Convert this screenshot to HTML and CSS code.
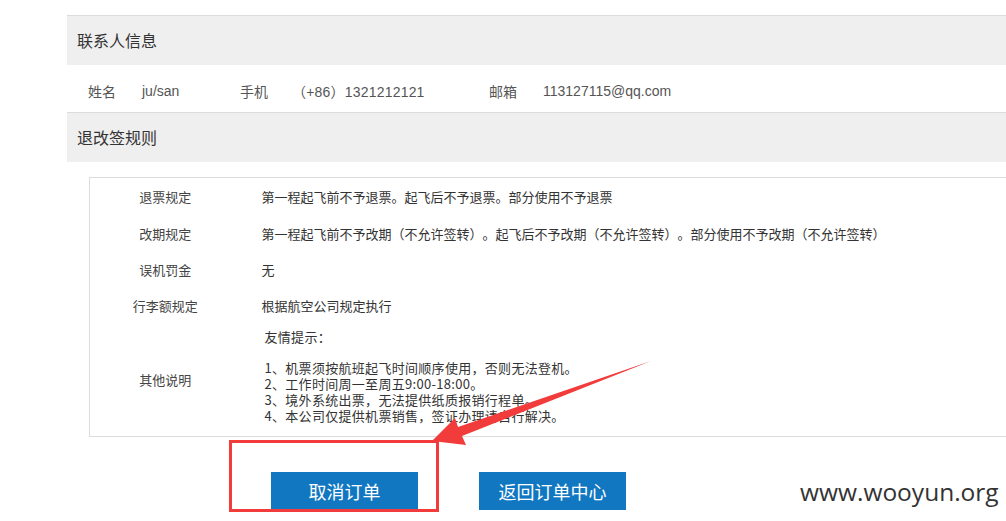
FILE: index.html
```html
<!DOCTYPE html>
<html lang="zh-CN">
<head>
    <meta charset="UTF-8">
    <title>订单详情</title>
    <link rel="stylesheet" href="styles.css">
</head>
<body>
<div class="page">
    <div class="section-title">联系人信息</div>
    <div class="contact">
        <span class="lbl">姓名</span><span class="val name">ju/san</span>
        <span class="lbl phone-lbl">手机</span><span class="val phone">（+86）1321212121</span>
        <span class="lbl">邮箱</span><span class="val">113127115@qq.com</span>
    </div>
    <div class="section-title">退改签规则</div>

    <table class="rules">
        <colgroup>
            <col class="key-col">
            <col>
        </colgroup>
        <tr>
            <td class="key">退票规定</td>
            <td>第一程起飞前不予退票。起飞后不予退票。部分使用不予退票</td>
        </tr>
        <tr>
            <td class="key">改期规定</td>
            <td>第一程起飞前不予改期（不允许签转）。起飞后不予改期（不允许签转）。部分使用不予改期（不允许签转）</td>
        </tr>
        <tr>
            <td class="key">误机罚金</td>
            <td>无</td>
        </tr>
        <tr>
            <td class="key">行李额规定</td>
            <td>根据航空公司规定执行</td>
        </tr>
        <tr class="other">
            <td class="key">其他说明</td>
            <td>
                <div class="tips">
                    <p>友情提示：</p>
                    <ul>
                        <li>1、机票须按航班起飞时间顺序使用，否则无法登机。</li>
                        <li>2、工作时间周一至周五9:00-18:00。</li>
                        <li>3、境外系统出票，无法提供纸质报销行程单。</li>
                        <li>4、本公司仅提供机票销售，签证办理请自行解决。</li>
                    </ul>
                </div>
            </td>
        </tr>
    </table>

    <div class="actions">
        <button class="btn">取消订单</button>
        <button class="btn">返回订单中心</button>
    </div>
</div>

<!-- screenshot markup -->
<div class="mark-box"></div>
<svg class="mark-arrow" width="1006" height="521" viewBox="0 0 1006 521">
    <polygon points="651,361 462,436 466,445 432,441 455,418 458,427" fill="#f23b3b"/>
</svg>
<div class="watermark">www.wooyun.org</div>
</body>
</html>
```

FILE: styles.css
```css
html, body {
    margin: 0;
    padding: 0;
    background: #fff;
    overflow: hidden;
}

body {
    width: 1006px;
    height: 521px;
    position: relative;
    font-family: "Noto Sans CJK SC", "Liberation Sans", sans-serif;
    color: #333;
    text-spacing-trim: space-all;
}

.page {
    margin-left: 67px;
    padding-top: 15px;
}

.section-title {
    border-top: 1px solid #dcdcdc;
    background-color: #efefef;
    height: 49px;
    line-height: 49px;
    padding-left: 10px;
    font-size: 16px;
    color: #333;
}

.contact {
    height: 43px;
    padding: 4px 0 0 21px;
    display: flex;
    align-items: center;
    font-family: "Liberation Sans", "Noto Sans CJK SC", sans-serif;
    font-size: 14px;
    color: #555;
}

.contact .lbl {
    width: 54px;
}

.contact .phone-lbl {
    width: 60px;
}

.contact .name {
    width: 98px;
}

.contact .phone {
    width: 197px;
    margin-left: -8px;
    letter-spacing: 0.2px;
}

.rules {
    margin: 15px 0 0 22px;
    width: 920px;
    table-layout: fixed;
    border: 1px solid #dcdcdc;
    border-collapse: collapse;
    font-size: 13px;
    color: #333;
}

.rules .key-col {
    width: 172px;
}

.rules td {
    height: 36px;
    padding: 0;
    vertical-align: middle;
    white-space: nowrap;
}

.rules tr:first-child td {
    height: 37px;
}

.rules td.key {
    padding-right: 21px;
    text-align: center;
    color: #444;
}

.rules .other td {
    height: 113px;
}

.tips {
    padding: 4px 0 10px 3px;
    letter-spacing: 0.3px;
}

.tips p {
    margin: 0;
    line-height: 16px;
}

.tips ul {
    list-style: none;
    margin: 15px 0 0;
    padding: 0;
    line-height: 16px;
}

.actions {
    display: flex;
    gap: 61px;
    padding: 35px 0 0 204px;
}

.btn {
    width: 147px;
    height: 38px;
    border: none;
    background-color: #1277c1;
    color: #fff;
    font-family: "Noto Sans CJK SC", sans-serif;
    font-size: 18px;
    padding: 0;
}

.mark-box {
    position: absolute;
    left: 229px;
    top: 440px;
    width: 204px;
    height: 66px;
    border: 3px solid #f23b3b;
}

.mark-arrow {
    position: absolute;
    left: 0;
    top: 0;
}

.watermark {
    position: absolute;
    left: 800px;
    top: 475px;
    font-family: "Open Sans", sans-serif;
    font-size: 24.5px;
    color: #333;
}
```
